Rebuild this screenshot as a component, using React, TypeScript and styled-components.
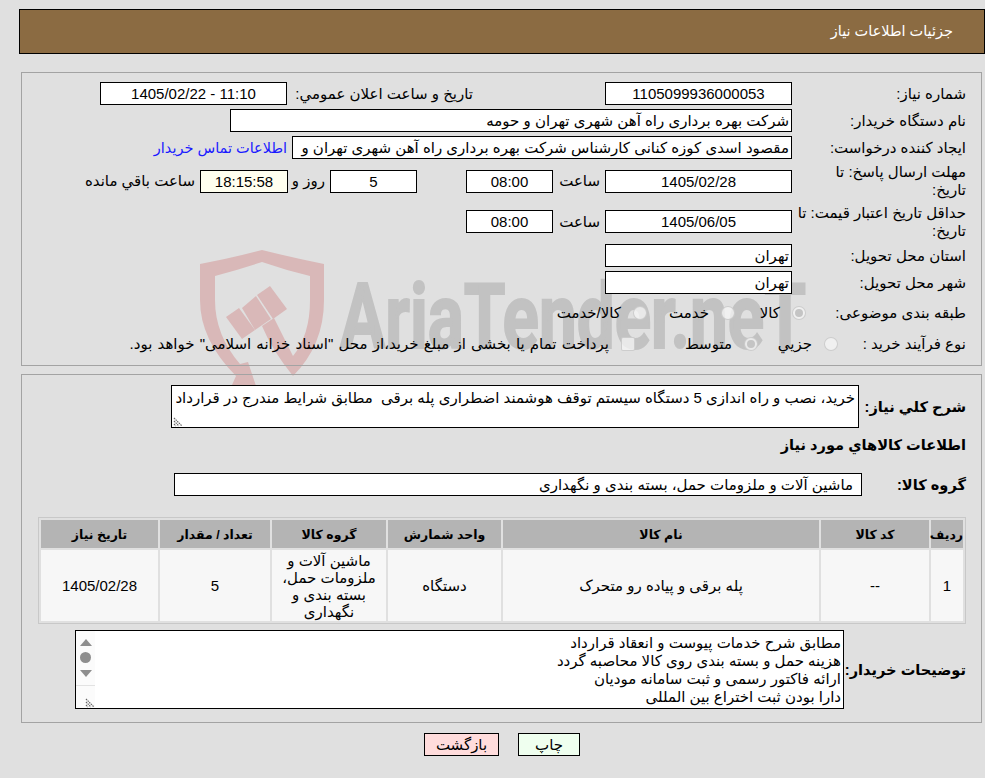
import styled, { createGlobalStyle } from "styled-components";

const GlobalStyle = createGlobalStyle`
  html, body {
    margin: 0;
    padding: 0;
    background: #e0e0e0;
  }
  body {
    font-family: "Liberation Sans", "DejaVu Sans", sans-serif;
    font-size: 15px;
    color: #000;
  }
`;

const rows = [
  {
    id: "1",
    code: "--",
    name: "پله برقی و پیاده رو متحرک",
    unit: "دستگاه",
    group: "ماشین آلات و ملزومات حمل، بسته بندی و نگهداری",
    qty: "5",
    date: "1405/02/28",
  },
];

const Watermark = () => (
  <WatermarkSvg viewBox="190 245 640 150" width="640" height="150">
    <g fill="#d9b8b8">
      <path d="M200 264 Q232 258 262 250 Q294 258 324 264 L324 300 Q324 345 293 376 Q272 350 262 326 L274 318 L293 356 Q310 335 310 300 L310 276 Q285 270 262 262 Q238 270 215 276 L215 300 Q215 335 240 364 L248 362 L256 386 L232 385 L236 376 Q200 340 200 300 Z" />
      <polygon points="270,286 287,309 273,319 257,295" />
      <polygon points="242,308 256,296 271,319 255,330" />
      <polygon points="226,317 239,308 255,330 242,339" />
    </g>
    <text
      x="340"
      y="348"
      fontFamily="Roboto, sans-serif"
      fontWeight="700"
      fontSize="90"
      textLength="466"
      lengthAdjust="spacingAndGlyphs"
      fill="#c2c2c2"
      stroke="#c2c2c2"
      strokeWidth="2"
    >
      AriaTender.neT
    </text>
  </WatermarkSvg>
);

const ResizeGrip = () => (
  <svg width="10" height="10" viewBox="0 0 10 10">
    <path d="M1 1l8 8M1 4l5 5M1 7l2 2" stroke="#666" strokeWidth="1.2" strokeDasharray="1.5 .8" fill="none" />
  </svg>
);

export default function App() {
  return (
    <Page dir="rtl">
      <GlobalStyle />
      <Watermark />
      <Content>
        <Header>جزئیات اطلاعات نیاز</Header>

        <Panel $top={9} $bottom={10}>
          <Row>
            <Label>شماره نیاز:</Label>
            <Field $width={187}>1105099936000053</Field>
            <Caption $width={180} $gap={132}>تاریخ و ساعت اعلان عمومي:</Caption>
            <Field $width={187} $gap={6}>11:10 - 1405/02/22</Field>
          </Row>
          <Row>
            <Label>نام دستگاه خریدار:</Label>
            <Field $width={562} $align="right">شرکت بهره برداری راه آهن شهری تهران و حومه</Field>
          </Row>
          <Row>
            <Label>ایجاد کننده درخواست:</Label>
            <Field $width={500} $align="right">مقصود اسدی کوزه کنانی کارشناس شرکت بهره برداری راه آهن شهری تهران و</Field>
            <ContactLink href="#" onClick={(e) => e.preventDefault()}>اطلاعات تماس خریدار</ContactLink>
          </Row>
          <Row $height={36}>
            <Label>مهلت ارسال پاسخ: تا<br />تاریخ:</Label>
            <Field $width={187}>1405/02/28</Field>
            <Caption $width={42} $gap={5}>ساعت</Caption>
            <Field $width={87} $gap={5}>08:00</Field>
            <Field $width={87} $gap={49}>5</Field>
            <Caption $width={28} $gap={5}>روز و</Caption>
            <Field $width={88} $gap={9} $bg="#ffffef">18:15:58</Field>
            <Caption $width={112} $gap={5}>ساعت باقي مانده</Caption>
          </Row>
          <Row $height={37}>
            <Label>حداقل تاریخ اعتبار قیمت: تا<br />تاریخ:</Label>
            <Field $width={187}>1405/06/05</Field>
            <Caption $width={42} $gap={5}>ساعت</Caption>
            <Field $width={87} $gap={5}>08:00</Field>
          </Row>
          <Row>
            <Label>استان محل تحویل:</Label>
            <Field $width={187} $align="right">تهران</Field>
          </Row>
          <Row>
            <Label>شهر محل تحویل:</Label>
            <Field $width={187} $align="right">تهران</Field>
          </Row>
          <Row $height={30}>
            <Label $width={160}>طبقه بندی موضوعی:</Label>
            <Choice $width={71}><RadioMark $checked />کالا</Choice>
            <Choice $width={88}><RadioMark />خدمت</Choice>
            <Choice><RadioMark />کالا/خدمت</Choice>
          </Row>
          <Row>
            <Label $width={128}>نوع فرآیند خرید :</Label>
            <Choice $width={80}><RadioMark />جزيي</Choice>
            <Choice $width={123}><RadioMark $checked />متوسط</Choice>
            <Choice>
              <CheckMark />
              <PaymentNote>پرداخت تمام یا بخشی از مبلغ خرید،از محل "اسناد خزانه اسلامی" خواهد بود.</PaymentNote>
            </Choice>
          </Row>
        </Panel>

        <Panel $top={10} $bottom={13} $spaced>
          <Row $height={43}>
            <Heading $width={107}>شرح كلي نياز:</Heading>
            <TextBox $width={688} $height={43}>
              خرید، نصب و راه اندازی 5 دستگاه سیستم توقف هوشمند اضطراری پله برقی  مطابق شرایط مندرج در قرارداد
              <GripSlot><ResizeGrip /></GripSlot>
            </TextBox>
          </Row>
          <Section>
            <Heading>اطلاعات كالاهاي مورد نياز</Heading>
          </Section>
          <Row>
            <Heading $width={104}>گروه كالا:</Heading>
            <Field $width={688} $align="right" $pad={8}>ماشین آلات و ملزومات حمل، بسته بندی و نگهداری</Field>
          </Row>

          <GoodsTable>
            <colgroup>
              <col width="32" />
              <col width="108" />
              <col width="316" />
              <col width="113" />
              <col width="114" />
              <col width="110" />
              <col width="117" />
            </colgroup>
            <thead>
              <tr>
                <HeadCell>ردیف</HeadCell>
                <HeadCell>کد کالا</HeadCell>
                <HeadCell>نام کالا</HeadCell>
                <HeadCell>واحد شمارش</HeadCell>
                <HeadCell>گروه کالا</HeadCell>
                <HeadCell>تعداد / مقدار</HeadCell>
                <HeadCell>تاریخ نیاز</HeadCell>
              </tr>
            </thead>
            <tbody>
              {rows.map((r) => (
                <tr key={r.id}>
                  <BodyCell>{r.id}</BodyCell>
                  <BodyCell>{r.code}</BodyCell>
                  <BodyCell>{r.name}</BodyCell>
                  <BodyCell>{r.unit}</BodyCell>
                  <BodyCell>{r.group}</BodyCell>
                  <BodyCell>{r.qty}</BodyCell>
                  <BodyCell>{r.date}</BodyCell>
                </tr>
              ))}
            </tbody>
          </GoodsTable>

          <NotesRow>
            <Heading $width={122}>توضیحات خریدار:</Heading>
            <NotesBox>
              <NotesText>
                <div>مطابق شرح خدمات پیوست و انعقاد قرارداد</div>
                <div>هزینه حمل و بسته بندی روی کالا محاصبه گردد</div>
                <div>ارائه فاکتور رسمی و ثبت سامانه مودیان</div>
                <div>دارا بودن ثبت اختراع بین المللی</div>
              </NotesText>
              <ScrollStrip>
                <ArrowUp />
                <Thumb />
                <ArrowDown />
                <StripCorner><ResizeGrip /></StripCorner>
              </ScrollStrip>
            </NotesBox>
          </NotesRow>
        </Panel>

        <Actions>
          <ActionButton $bg="#efffef" $width={62}>چاپ</ActionButton>
          <ActionButton $bg="#ffdcdc" $width={75}>بازگشت</ActionButton>
        </Actions>
      </Content>
    </Page>
  );
}

const Page = styled.div`
  position: relative;
  height: 778px;
  overflow: hidden;
  padding: 9px 0 0 19px;
  box-sizing: border-box;
`;

const WatermarkSvg = styled.svg`
  position: absolute;
  left: 190px;
  top: 245px;
  direction: ltr;
`;

const Content = styled.div`
  position: relative;
`;

const Header = styled.div`
  height: 45px;
  box-sizing: border-box;
  padding-right: 31px;
  border: 1px solid #000;
  background: #8b6b42;
  color: #fff;
  font-size: 14.5px;
  line-height: 43px;
  margin-bottom: 18px;
`;

const Panel = styled.section<{ $top: number; $bottom: number; $spaced?: boolean }>`
  display: flex;
  flex-direction: column;
  gap: 4px;
  margin: ${(p) => (p.$spaced ? "8px" : "0")} 3px 0 2px;
  padding: ${(p) => p.$top}px 15px ${(p) => p.$bottom}px 16px;
  border: 1px solid #a3a3a3;
`;

const Row = styled.div<{ $height?: number }>`
  display: flex;
  align-items: center;
  min-height: ${(p) => p.$height ?? 23}px;
`;

const Label = styled.div<{ $width?: number }>`
  flex: none;
  width: ${(p) => p.$width ?? 174}px;
  line-height: 18px;
`;

const Field = styled.div<{ $width: number; $gap?: number; $align?: string; $bg?: string; $pad?: number }>`
  flex: none;
  box-sizing: border-box;
  width: ${(p) => p.$width}px;
  height: 23px;
  margin-right: ${(p) => p.$gap ?? 0}px;
  padding: 0 ${(p) => p.$pad ?? 2}px;
  border: 1px solid #000;
  background: ${(p) => p.$bg ?? "#fff"};
  line-height: 21px;
  text-align: ${(p) => (p.$align === "right" ? "right" : "center")};
  white-space: nowrap;
  overflow: hidden;
`;

const Caption = styled.div<{ $width: number; $gap?: number }>`
  flex: none;
  width: ${(p) => p.$width}px;
  margin-right: ${(p) => p.$gap ?? 0}px;
  white-space: nowrap;
`;

const ContactLink = styled.a`
  margin-right: 5px;
  color: #1a1aff;
  font-size: 14.5px;
  text-decoration: none;
  white-space: nowrap;
`;

const Choice = styled.div<{ $width?: number }>`
  flex: none;
  display: flex;
  align-items: center;
  gap: 12px;
  width: ${(p) => (p.$width ? `${p.$width}px` : "auto")};
  white-space: pre;
`;

const PaymentNote = styled.span`
  word-spacing: 1px;
`;

const RadioMark = styled.span<{ $checked?: boolean }>`
  flex: none;
  display: flex;
  align-items: center;
  justify-content: center;
  box-sizing: border-box;
  width: 14px;
  height: 14px;
  border-radius: 50%;
  border: 1px solid rgba(190, 190, 190, 0.7);
  background: rgba(245, 245, 245, 0.75);

  &::after {
    content: "";
    display: ${(p) => (p.$checked ? "block" : "none")};
    width: 8px;
    height: 8px;
    border-radius: 50%;
    background: #c4c4c4;
  }
`;

const CheckMark = styled.span`
  flex: none;
  box-sizing: border-box;
  width: 14px;
  height: 14px;
  border-radius: 2px;
  border: 1px solid rgba(190, 190, 190, 0.7);
  background: rgba(245, 245, 245, 0.75);
`;

const Heading = styled.div<{ $width?: number }>`
  flex: none;
  width: ${(p) => (p.$width ? `${p.$width}px` : "auto")};
  font-size: 14.6px;
  font-weight: 700;
  white-space: nowrap;
`;

const TextBox = styled.div<{ $width: number; $height: number }>`
  position: relative;
  flex: none;
  box-sizing: border-box;
  width: ${(p) => p.$width}px;
  height: ${(p) => p.$height}px;
  padding: 3px 3px 0;
  border: 1px solid #000;
  background: #fff;
  line-height: 18px;
  white-space: pre-wrap;
`;

const GripSlot = styled.span`
  position: absolute;
  left: 1px;
  bottom: 0;
  line-height: 0;
`;

const Section = styled.div`
  display: flex;
  align-items: center;
  height: 20px;
  margin: 2px 0 15px;
`;

const GoodsTable = styled.table`
  width: 928px;
  margin: 17px 0 2px;
  table-layout: fixed;
  border-collapse: separate;
  border-spacing: 2px;
  border: 1px solid #c8c8c8;
`;

const HeadCell = styled.th`
  height: 28px;
  padding: 0;
  background: #b4b4b4;
  font-size: 12.5px;
  font-weight: 700;
  text-align: center;
`;

const BodyCell = styled.td`
  height: 71px;
  padding: 0 4px;
  background: #f7f7f7;
  line-height: 17px;
  text-align: center;
`;

const NotesRow = styled.div`
  display: flex;
  align-items: center;
`;

const NotesBox = styled.div`
  display: flex;
  flex: none;
  box-sizing: border-box;
  width: 769px;
  height: 79px;
  border: 1px solid #000;
  background: #fff;
`;

const NotesText = styled.div`
  flex: 1;
  padding: 3px 2px 0 0;
  line-height: 18px;
  white-space: nowrap;
`;

const ScrollStrip = styled.div`
  flex: none;
  display: flex;
  flex-direction: column;
  align-items: center;
  width: 19px;
  background: #fbfbfb;
`;

const ArrowUp = styled.span`
  margin-top: 8px;
  border-left: 6px solid transparent;
  border-right: 6px solid transparent;
  border-bottom: 7px solid #8e8e8e;
`;

const Thumb = styled.span`
  width: 11px;
  height: 11px;
  margin-top: 6px;
  border-radius: 50%;
  background: #8e8e8e;
`;

const ArrowDown = styled.span`
  margin-top: 7px;
  border-left: 6px solid transparent;
  border-right: 6px solid transparent;
  border-top: 7px solid #8e8e8e;
`;

const StripCorner = styled.span`
  flex: 1;
  display: flex;
  align-items: flex-end;
  align-self: stretch;
  margin-top: 8px;
  border-top: 1px solid #e2e2e2;
`;

const Actions = styled.div`
  display: flex;
  justify-content: center;
  gap: 19px;
  margin-top: 10px;
`;

const ActionButton = styled.button<{ $bg: string; $width: number }>`
  box-sizing: border-box;
  width: ${(p) => p.$width}px;
  height: 23px;
  padding: 0;
  border: 1px solid #000;
  background: ${(p) => p.$bg};
  font-family: inherit;
  font-size: 15px;
  color: #000;
`;
